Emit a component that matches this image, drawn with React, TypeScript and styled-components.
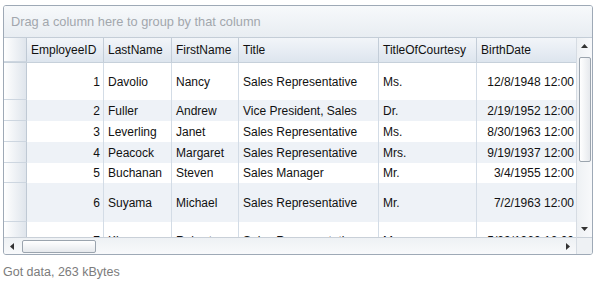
import styled, { createGlobalStyle } from 'styled-components'

const GlobalStyle = createGlobalStyle`
  body {
    margin: 0;
    background: #ffffff;
    font-family: "Liberation Sans", Arial, sans-serif;
  }
`

const Page = styled.div`
  padding: 5px 2px 0 3px;
  width: 590px;
`

const GridFrame = styled.div`
  display: flex;
  flex-direction: column;
  height: 250px;
  box-sizing: border-box;
  border: 1px solid #9ea9b6;
  border-radius: 3px;
  overflow: hidden;
  background: #ffffff;
`

const GroupPanel = styled.div`
  height: 31px;
  flex: none;
  display: flex;
  align-items: center;
  padding-left: 7px;
  font-size: 12.8px;
  color: #a2a7ad;
  background: linear-gradient(#f7f9fb, #e8edf2);
  border-bottom: 1px solid #c4cdd7;
`

const Body = styled.div`
  flex: 1;
  display: grid;
  grid-template-columns: 1fr 16px;
  grid-template-rows: 1fr 17px;
  min-height: 0;
`

const Viewport = styled.div`
  overflow: hidden;
`

const cols = '23px 77px 68px 67px 140px 98px 130px'

const Row = styled.div<{ $h: number; $alt?: boolean }>`
  display: grid;
  grid-template-columns: ${cols};
  height: ${p => p.$h}px;
  background: ${p => (p.$alt ? '#eef2f7' : '#ffffff')};
  font-size: 12px;
  color: #111;
`

const HeaderRow = styled.div`
  display: grid;
  grid-template-columns: ${cols};
  height: 25px;
  box-sizing: border-box;
  background: linear-gradient(#f2f5f9, #dde5ee);
  border-bottom: 1px solid #c6d0da;
  font-size: 12px;
  color: #111;
`

const HeaderCell = styled.div`
  display: flex;
  align-items: center;
  padding: 0 4px;
  border-right: 1px solid #c3cdd8;
  white-space: nowrap;
  overflow: hidden;
`

const Indicator = styled.div`
  background: linear-gradient(90deg, #ffffff, #dfe5ec);
  border-right: 1px solid #bfc9d4;
  border-bottom: 1px solid #cdd6e0;
`

const Cell = styled.div<{ $right?: boolean; $padRight?: number }>`
  display: flex;
  align-items: center;
  justify-content: ${p => (p.$right ? 'flex-end' : 'flex-start')};
  padding: 0 ${p => p.$padRight ?? 3}px 0 4px;
  border-right: 1px solid #d3dce6;
  white-space: nowrap;
  overflow: hidden;
`

const VScroll = styled.div`
  display: flex;
  flex-direction: column;
  align-items: center;
  background: linear-gradient(90deg, #eef1f4, #f8f9fb);
  border-left: 1px solid #d6dce3;
`

const HScroll = styled.div`
  display: flex;
  align-items: center;
  background: linear-gradient(#eef1f4, #f8f9fb);
  border-top: 1px solid #c9d0d8;
`

const Corner = styled.div`
  background: #eef1f4;
  border-top: 1px solid #c9d0d8;
  border-left: 1px solid #d6dce3;
`

const Arrow = styled.div`
  width: 16px;
  height: 16px;
  display: flex;
  align-items: center;
  justify-content: center;
  flex: none;
`

const VThumb = styled.div`
  width: 12px;
  height: 105px;
  margin-top: 3px;
  box-sizing: border-box;
  border: 1px solid #9ba4ae;
  border-radius: 2px;
  background: linear-gradient(90deg, #ffffff, #e6e9ed);
`

const HThumb = styled.div`
  width: 74px;
  height: 13px;
  margin-left: 2px;
  box-sizing: border-box;
  border: 1px solid #9ba4ae;
  border-radius: 2px;
  background: linear-gradient(#ffffff, #e6e9ed);
`

const Spacer = styled.div`
  flex: 1;
`

const Footer = styled.div`
  margin-top: 10px;
  font-size: 12.5px;
  color: #7c7c7c;
`

const Tri = ({ dir }: { dir: 'up' | 'down' | 'left' | 'right' }) => {
  const pts = {
    up: '0,4 3.5,0 7,4',
    down: '0,0 3.5,4 7,0',
    left: '4,0 0,3.5 4,7',
    right: '0,0 4,3.5 0,7',
  }[dir]
  const horiz = dir === 'left' || dir === 'right'
  return (
    <svg width={horiz ? 4 : 7} height={horiz ? 7 : 4}>
      <polygon points={pts} fill="#333" />
    </svg>
  )
}

const rows = [
  { id: 1, last: 'Davolio', first: 'Nancy', title: 'Sales Representative', toc: 'Ms.', birth: '12/8/1948 12:00', h: 37 },
  { id: 2, last: 'Fuller', first: 'Andrew', title: 'Vice President, Sales', toc: 'Dr.', birth: '2/19/1952 12:00', h: 21 },
  { id: 3, last: 'Leverling', first: 'Janet', title: 'Sales Representative', toc: 'Ms.', birth: '8/30/1963 12:00', h: 21 },
  { id: 4, last: 'Peacock', first: 'Margaret', title: 'Sales Representative', toc: 'Mrs.', birth: '9/19/1937 12:00', h: 21 },
  { id: 5, last: 'Buchanan', first: 'Steven', title: 'Sales Manager', toc: 'Mr.', birth: '3/4/1955 12:00', h: 20 },
  { id: 6, last: 'Suyama', first: 'Michael', title: 'Sales Representative', toc: 'Mr.', birth: '7/2/1963 12:00', h: 39 },
  { id: 7, last: 'King', first: 'Robert', title: 'Sales Representative', toc: 'Mr.', birth: '5/29/1960 12:00', h: 37 },
]

const headers = ['EmployeeID', 'LastName', 'FirstName', 'Title', 'TitleOfCourtesy', 'BirthDate']

export default function App() {
  return (
    <>
      <GlobalStyle />
      <Page>
        <GridFrame>
          <GroupPanel>Drag a column here to group by that column</GroupPanel>
          <Body>
            <Viewport>
              <HeaderRow>
                <Indicator />
                {headers.map(h => (
                  <HeaderCell key={h}>{h}</HeaderCell>
                ))}
              </HeaderRow>
              {rows.map((r, i) => (
                <Row key={r.id} $h={r.h} $alt={i % 2 === 1}>
                  <Indicator />
                  <Cell $right>{r.id}</Cell>
                  <Cell>{r.last}</Cell>
                  <Cell>{r.first}</Cell>
                  <Cell>{r.title}</Cell>
                  <Cell>{r.toc}</Cell>
                  <Cell $right $padRight={32}>{r.birth}</Cell>
                </Row>
              ))}
            </Viewport>
            <VScroll>
              <Arrow><Tri dir="up" /></Arrow>
              <VThumb />
              <Spacer />
              <Arrow><Tri dir="down" /></Arrow>
            </VScroll>
            <HScroll>
              <Arrow><Tri dir="left" /></Arrow>
              <HThumb />
              <Spacer />
              <Arrow><Tri dir="right" /></Arrow>
            </HScroll>
            <Corner />
          </Body>
        </GridFrame>
        <Footer>Got data, 263 kBytes</Footer>
      </Page>
    </>
  )
}
